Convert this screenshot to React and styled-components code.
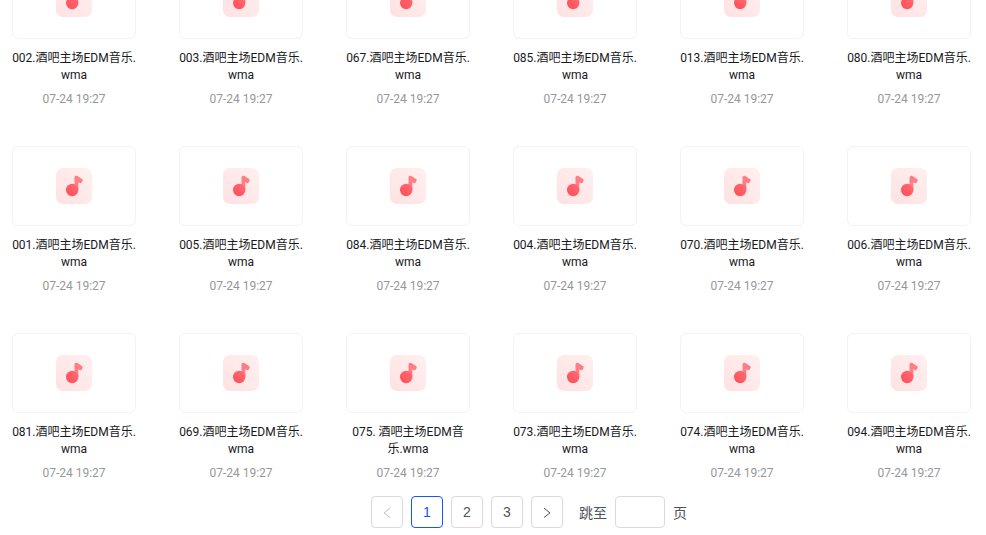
import React, { useState } from "react";
import styled, { createGlobalStyle, css } from "styled-components";

const GlobalStyle = createGlobalStyle`
  * {
    box-sizing: border-box;
  }

  body {
    margin: 0;
    background-color: white;
    font-family: Roboto, "Noto Sans CJK SC", sans-serif;
  }
`;

const Page = styled.main`
  display: flex;
  flex-direction: column;
  justify-content: flex-end;
  height: 100vh;
  padding-bottom: 7px;
  overflow: hidden;
`;

const FileGrid = styled.ul`
  display: grid;
  grid-template-columns: repeat(6, 124px);
  justify-content: space-between;
  row-gap: 38px;
  margin: 0;
  padding: 0 15px 0 12px;
  list-style: none;
`;

const FileItem = styled.li`
  display: flex;
  flex-direction: column;
  text-align: center;
`;

const Thumb = styled.div`
  display: flex;
  align-items: center;
  justify-content: center;
  height: 80px;
  border: 1px solid #f3f3f4;
  border-radius: 6px;
`;

const FileName = styled.div`
  margin-top: 11px;
  color: #18191c;
  font-size: 12px;
  line-height: 17px;
  word-break: break-all;
`;

const FileDate = styled.time`
  margin-top: 6px;
  color: #96979a;
  font-size: 12px;
  line-height: 18px;
`;

const Pagination = styled.nav`
  display: flex;
  align-items: center;
  justify-content: center;
  gap: 8px;
  margin-top: 14px;
  padding-left: 72px;
  color: #505259;
  font-size: 14px;
`;

const PageButton = styled.button`
  display: flex;
  align-items: center;
  justify-content: center;
  width: 32px;
  height: 32px;
  padding: 0;
  border: 1px solid #d9d9d9;
  border-radius: 4px;
  background-color: white;
  color: #505259;
  font-family: "Liberation Sans", Arial, sans-serif;
  font-size: 14px;
  cursor: pointer;

  &:disabled {
    color: #bfbfbf;
    cursor: not-allowed;
  }

  ${({ $active }) =>
    $active &&
    css`
      border-color: #1456f0;
      color: #1456f0;
    `}
`;

const Jumper = styled.label`
  display: flex;
  align-items: center;
  gap: 8px;
  margin-left: 8px;
`;

const JumpInput = styled.input`
  width: 50px;
  height: 32px;
  padding: 4px 11px;
  border: 1px solid #d9d9d9;
  border-radius: 4px;
  font-size: 14px;
  outline: none;
`;

const names = [
  "002.酒吧主场EDM音乐.wma",
  "003.酒吧主场EDM音乐.wma",
  "067.酒吧主场EDM音乐.wma",
  "085.酒吧主场EDM音乐.wma",
  "013.酒吧主场EDM音乐.wma",
  "080.酒吧主场EDM音乐.wma",
  "001.酒吧主场EDM音乐.wma",
  "005.酒吧主场EDM音乐.wma",
  "084.酒吧主场EDM音乐.wma",
  "004.酒吧主场EDM音乐.wma",
  "070.酒吧主场EDM音乐.wma",
  "006.酒吧主场EDM音乐.wma",
  "081.酒吧主场EDM音乐.wma",
  "069.酒吧主场EDM音乐.wma",
  "075. 酒吧主场EDM音乐.wma",
  "073.酒吧主场EDM音乐.wma",
  "074.酒吧主场EDM音乐.wma",
  "094.酒吧主场EDM音乐.wma",
];

const MusicIcon = () => (
  <svg width="36" height="36" viewBox="0 0 36 36" aria-hidden="true">
    <defs>
      <linearGradient id="tile" x1="1" y1="0" x2="0" y2="1">
        <stop offset="0" stopColor="#fff0f0" />
        <stop offset="1" stopColor="#ffe1e2" />
      </linearGradient>
      <linearGradient id="head" x1="0" y1="1" x2="1" y2="0">
        <stop offset="0" stopColor="#ff4b55" />
        <stop offset="1" stopColor="#ff6e76" />
      </linearGradient>
    </defs>
    <rect width="36" height="36" rx="7" fill="url(#tile)" />
    <path
      d="M18.5 9.7c0-1.8 1.5-2.5 2.9-1.6l4.6 2.9c.7.5.9 1.2.5 1.9l-.8 1.5c-.4.8-1.2.9-2 .5l-1.4-.7V22h-3.8z"
      fill="#ff7d84"
    />
    <circle cx="16.2" cy="22" r="6.2" fill="url(#head)" />
  </svg>
);

const Arrow = ({ d }) => (
  <svg
    width="12"
    height="12"
    viewBox="0 0 12 12"
    fill="none"
    stroke="currentColor"
    aria-hidden="true"
  >
    <path d={d} />
  </svg>
);

const App = () => {
  const [page, setPage] = useState(1);
  const [target, setTarget] = useState("");

  const jump = (e) => {
    const next = Number(target);
    if (e.key === "Enter" && [1, 2, 3].includes(next)) {
      setPage(next);
      setTarget("");
    }
  };

  return (
    <>
      <GlobalStyle />
      <Page>
        <FileGrid>
          {names.map((name) => (
            <FileItem key={name}>
              <Thumb>
                <MusicIcon />
              </Thumb>
              <FileName>{name}</FileName>
              <FileDate>07-24 19:27</FileDate>
            </FileItem>
          ))}
        </FileGrid>
        <Pagination>
          <PageButton disabled={page === 1} onClick={() => setPage(page - 1)}>
            <Arrow d="M9 2.2 3 6.9l6 4.6" />
          </PageButton>
          {[1, 2, 3].map((n) => (
            <PageButton key={n} $active={n === page} onClick={() => setPage(n)}>
              {n}
            </PageButton>
          ))}
          <PageButton disabled={page === 3} onClick={() => setPage(page + 1)}>
            <Arrow d="M3 2.2 9 6.9l-6 4.6" />
          </PageButton>
          <Jumper>
            跳至
            <JumpInput
              value={target}
              onChange={(e) => setTarget(e.target.value)}
              onKeyDown={jump}
            />
            页
          </Jumper>
        </Pagination>
      </Page>
    </>
  );
};

export default App;
